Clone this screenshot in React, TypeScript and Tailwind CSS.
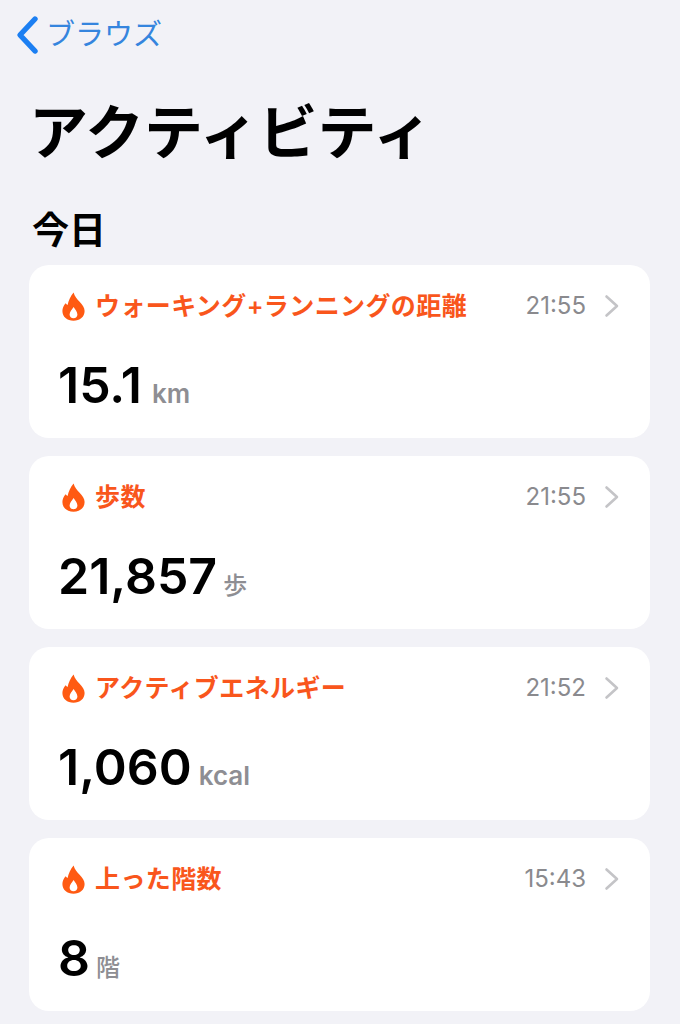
const jp = "font-['Inter','Noto_Sans_CJK_JP',sans-serif]";

function Flame() {
  return (
    <svg width="23" height="29" viewBox="0 0 23 29" className="shrink-0">
      <path
        fillRule="evenodd"
        fill="#ff5a12"
        d="M11.6 .4C12.6 4.4 15 6.8 17.6 9.8C20.4 13 22.6 15.6 22.6 19C22.6 24.8 17.8 28.8 11.5 28.8C5.2 28.8 .4 24.8 .4 19C.4 16 1.6 13.6 3.6 11.2C4.2 12 4.8 12.6 5.6 13C6.4 8.6 8.6 3.8 11.6 .4ZM11.6 15C10.2 17.4 7.6 19.8 7.6 22.4C7.6 24.8 9.2 26.2 11.5 26.2C13.8 26.2 15.4 24.8 15.4 22.4C15.4 19.8 13 17.4 11.6 15Z"
      />
    </svg>
  );
}

function Card({ title, time, value, unit, unitClass }: { title: string; time: string; value: string; unit: string; unitClass: string }) {
  return (
    <div className="h-[173px] rounded-[20px] bg-white pl-[33px] pr-[30px] pt-[26px]">
      <div className="flex h-[30px] items-center">
        <Flame />
        <span className="ml-[10px] text-[25px] font-semibold leading-[30px] text-[#f9561c] tracking-[0.4px]">{title}</span>
        <span className="ml-auto text-[24px] leading-[30px] text-[#8a8a8e]">{time}</span>
        <svg width="16" height="24" viewBox="0 0 16 24" className="ml-[18px] shrink-0">
          <path d="M2.5 2.5L13 12L2.5 21.5" fill="none" stroke="#c4c4c7" strokeWidth="2.6" strokeLinecap="round" strokeLinejoin="round" />
        </svg>
      </div>
      <div className="mt-[34px] -ml-[4px] flex items-baseline">
        <span className="text-[50px] font-semibold leading-[60px] text-black">{value}</span>
        <span className={`${unitClass} text-[#8e8e93] leading-[30px]`}>{unit}</span>
      </div>
    </div>
  );
}

export default function App() {
  return (
    <div className={`${jp} h-[1024px] w-[680px] overflow-hidden bg-[#f2f2f7] pl-[29px] pr-[30px]`}>
      <div className="flex h-[69px] items-center -ml-[14px]">
        <svg width="24" height="40" viewBox="0 0 24 40" className="shrink-0">
          <path d="M20 4L5 20L20 36" fill="none" stroke="#1c7ff2" strokeWidth="5.4" strokeLinecap="round" strokeLinejoin="round" />
        </svg>
        <span className="ml-[7px] text-[29px] leading-[36px] text-[#3585de]">ブラウズ</span>
      </div>
      <h1 className="mt-[29px] text-[59px] font-bold leading-[70px] text-black">アクティビティ</h1>
      <h2 className="mt-[43px] pl-[3px] text-[37px] font-semibold leading-[40px] text-black">今日</h2>
      <div className="mt-[14px] flex flex-col gap-[18px]">
        <Card title="ウォーキング+ランニングの距離" time="21:55" value="15.1" unit="km" unitClass="ml-[10px] text-[26px] font-semibold" />
        <Card title="歩数" time="21:55" value="21,857" unit="歩" unitClass="ml-[6px] text-[24px] font-medium" />
        <Card title="アクティブエネルギー" time="21:52" value="1,060" unit="kcal" unitClass="ml-[7px] text-[26px] font-semibold" />
        <Card title="上った階数" time="15:43" value="8" unit="階" unitClass="ml-[6px] text-[24px] font-medium" />
      </div>
    </div>
  );
}
